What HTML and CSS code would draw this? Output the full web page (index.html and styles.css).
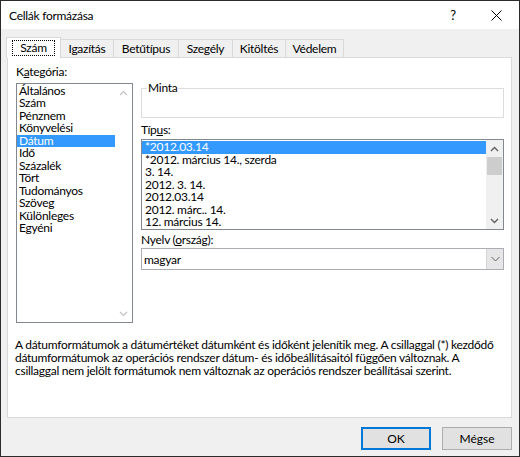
FILE: index.html
```html
<!DOCTYPE html>
<html>
  <head>
    <meta charset="utf-8">
    <link rel="stylesheet" href="styles.css">
  </head>
  <body>
    <div class="window">
      <div class="titlebar">
        <span class="caption">Cellák formázása</span>
        <span class="cap-btn help">?</span>
        <span class="cap-btn close">
          <svg width="11" height="11" viewBox="0 0 11 11"><path d="M0.5 0.5L10.5 10.5M10.5 0.5L0.5 10.5" stroke="#000" stroke-width="1" fill="none"/></svg>
        </span>
      </div>

      <div class="tabs">
        <div class="tab active t-szam"><span class="focus">Szám</span></div>
        <div class="tab t-igaz">Igazítás</div>
        <div class="tab t-betu">Betűtípus</div>
        <div class="tab t-szeg">Szegély</div>
        <div class="tab t-kit">Kitöltés</div>
        <div class="tab t-ved">Védelem</div>
      </div>

      <div class="panel">
        <div class="panel-body">
          <div class="col-left">
            <div class="label">K<u>a</u>tegória:</div>
            <div class="listbox cat">
              <ul class="items">
                <li>Általános</li>
                <li>Szám</li>
                <li>Pénznem</li>
                <li>Könyvelési</li>
                <li class="sel">Dátum</li>
                <li>Idő</li>
                <li>Százalék</li>
                <li>Tört</li>
                <li>Tudományos</li>
                <li>Szöveg</li>
                <li>Különleges</li>
                <li>Egyéni</li>
              </ul>
              <div class="vscroll off">
                <span class="arrow"><svg width="9" height="6" viewBox="0 0 9 6"><path d="M1 5L4.5 1.5L8 5" stroke="#c2c2c2" stroke-width="1.2" fill="none"/></svg></span>
                <span class="arrow"><svg width="9" height="6" viewBox="0 0 9 6"><path d="M1 1L4.5 4.5L8 1" stroke="#c2c2c2" stroke-width="1.2" fill="none"/></svg></span>
              </div>
            </div>
          </div>

          <div class="col-right">
            <fieldset class="sample"><legend>Minta</legend></fieldset>

            <div class="label gap-sm">Típ<u>u</u>s:</div>
            <div class="listbox type">
              <ul class="items">
                <li class="sel">*2012.03.14</li>
                <li>*2012. március 14., szerda</li>
                <li>3. 14.</li>
                <li>2012. 3. 14.</li>
                <li>2012.03.14</li>
                <li>2012. márc.. 14.</li>
                <li>12. március 14.</li>
              </ul>
              <div class="vscroll">
                <span class="arrow"><svg width="9" height="6" viewBox="0 0 9 6"><path d="M1 5L4.5 1.5L8 5" stroke="#606060" stroke-width="1.4" fill="none"/></svg></span>
                <span class="thumb"></span>
                <span class="track"></span>
                <span class="arrow"><svg width="9" height="6" viewBox="0 0 9 6"><path d="M1 1L4.5 4.5L8 1" stroke="#606060" stroke-width="1.4" fill="none"/></svg></span>
              </div>
            </div>

            <div class="label gap-xs">Nyelv (<u>o</u>rszág):</div>
            <div class="combo">
              <span class="combo-value">magyar</span>
              <span class="combo-btn"><svg width="9" height="6" viewBox="0 0 9 6"><path d="M0.5 1L4.5 5L8.5 1" stroke="#606060" stroke-width="1" fill="none"/></svg></span>
            </div>
          </div>
        </div>

        <p class="desc">A dátumformátumok a dátumértéket dátumként és időként jelenítik meg. A csillaggal (*) kezdődő<br>dátumformátumok az operációs rendszer dátum- és időbeállításaitól függően változnak. A<br>csillaggal nem jelölt formátumok nem változnak az operációs rendszer beállításai szerint.</p>
      </div>

      <div class="buttons">
        <button class="btn default">OK</button>
        <button class="btn">Mégse</button>
      </div>
    </div>
  </body>
</html>
```

FILE: styles.css
```css
*{
    margin:0;
    padding:0;
    box-sizing:border-box;
}
body{
    background:#fff;
    font-family:Lato, "Noto Sans", sans-serif;
    font-size:12px;
    letter-spacing:-0.27px;
    color:#000;
}
.window{
    width:520px;
    height:457px;
    border:1px solid #2b2b2b;
    background:#f0f0f0;
    display:flex;
    flex-direction:column;
}

/* title bar */
.titlebar{
    height:28px;
    background:#fff;
    display:flex;
    align-items:center;
    padding-left:8px;
}
.caption{
    flex:1;
}
.cap-btn{
    height:28px;
    display:flex;
    align-items:center;
    justify-content:center;
}
.help{
    width:40px;
    font-size:13px;
}
.close{
    width:46px;
}

/* tabs */
.tabs{
    display:flex;
    align-items:flex-end;
    height:20px;
    margin-top:8px;
    padding-left:5px;
}
.tab{
    height:18px;
    border:1px solid #d9d9d9;
    border-bottom:none;
    margin-left:-1px;
    display:flex;
    align-items:center;
    justify-content:center;
    white-space:nowrap;
}
.tab:first-child{
    margin-left:0;
}
.tab.active{
    height:21px;
    margin-bottom:-1px;
    background:#fff;
    position:relative;
    z-index:1;
}
.focus{
    outline:1px dotted #000;
    padding:0 7px;
    line-height:14px;
}
.t-szam{ width:55px; }
.t-igaz{ width:54px; }
.t-betu{ width:66px; }
.t-szeg{ width:55px; }
.t-kit{ width:54px; }
.t-ved{ width:59px; }

/* panel */
.panel{
    height:361px;
    margin:0 7px 0 6px;
    background:#fff;
    border:1px solid #d9d9d9;
    padding:6px 7px 0 8px;
}
.panel-body{
    display:grid;
    grid-template-columns:117px 363px;
    column-gap:8px;
}
.label{
    line-height:15px;
    margin-bottom:4px;
}
.label.gap-sm{
    margin-top:4px;
    margin-bottom:2px;
}
.label.gap-xs{
    margin-top:2px;
    margin-bottom:1px;
}
.label u{
    text-decoration-thickness:1px;
}

.listbox{
    border:1px solid #828790;
    background:#fff;
    display:flex;
    overflow:hidden;
}
.cat{
    height:240px;
}
.type{
    height:91px;
}
.items{
    list-style:none;
    flex:1;
    padding-top:1px;
}
.cat .items{
    padding-top:0.5px;
}
.items li{
    height:12.5px;
    line-height:12.5px;
    padding-left:2px;
    white-space:nowrap;
}
.type .items li{
    padding-left:3px;
}
.items li.sel{
    background:#3399ff;
    color:#fff;
}

.vscroll{
    width:17px;
    display:flex;
    flex-direction:column;
    background:#f0f0f0;
}
.vscroll.off{
    background:#fff;
    justify-content:space-between;
}
.arrow{
    height:17px;
    display:flex;
    align-items:center;
    justify-content:center;
}
.thumb{
    height:18px;
    margin:0 1px;
    background:#cdcdcd;
}
.track{
    flex:1;
}

/* sample group */
.sample{
    height:37px;
    margin-top:17px;
    border:1px solid #dcdcdc;
    padding:0 0 0 5px;
}
.sample legend{
    padding:0 1px;
    line-height:14px;
}

/* language combo */
.combo{
    height:22px;
    border:1px solid #abadb3;
    background:#fff;
    display:flex;
    align-items:center;
}
.combo-value{
    flex:1;
    padding-left:2px;
}
.combo-btn{
    width:17px;
    height:100%;
    background:#e6e6e6;
    border-left:1px solid #d4d4d4;
    display:flex;
    align-items:center;
    justify-content:center;
}

.desc{
    margin-top:16px;
    margin-left:-1px;
    line-height:12.8px;
    white-space:nowrap;
}

/* bottom buttons */
.buttons{
    display:flex;
    justify-content:flex-end;
    gap:11px;
    margin-top:9px;
    padding-right:7px;
}
.btn{
    width:70px;
    height:23px;
    background:#e1e1e1;
    border:1px solid #adadad;
    font:inherit;
    color:#000;
}
.btn.default{
    border-color:#0078d7;
    box-shadow:inset 0 0 0 1px #0078d7;
}
```
